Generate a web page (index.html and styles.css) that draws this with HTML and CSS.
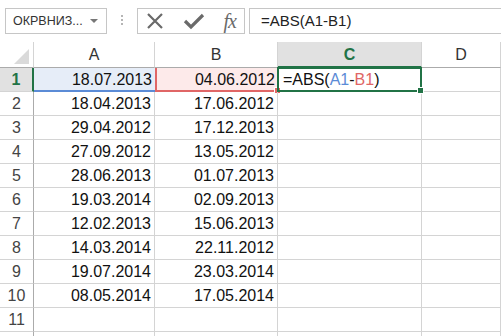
FILE: index.html
```html
<!DOCTYPE html>
<html lang="ru">
<head>
    <meta charset="UTF-8">
    <title>ABS</title>
    <link rel="stylesheet" href="styles.css">
</head>
<body>

<!-- Formula bar -->
<div class="toolbar">
    <div class="name-box">
        <span>ОКРВНИЗ...</span>
        <span class="arrow"></span>
    </div>
    <div class="grip"><i></i><i></i><i></i></div>
    <div class="fx-box">
        <svg width="20" height="18" viewBox="0 0 20 18">
            <path d="M3 2 L17 16 M17 2 L3 16" stroke="#6a6a6a" stroke-width="2.2" fill="none"/>
        </svg>
        <svg width="22" height="18" viewBox="0 0 22 18">
            <path d="M2 9 L8 15 L20 3" stroke="#6a6a6a" stroke-width="3.2" fill="none"/>
        </svg>
        <span class="fx">fx</span>
    </div>
    <div class="formula">=ABS(A1-B1)</div>
</div>

<!-- Sheet -->
<div class="sheet">
    <div class="corner"><span class="tri"></span></div>
    <div class="col-head">A</div>
    <div class="col-head">B</div>
    <div class="col-head active">C</div>
    <div class="col-head">D</div>

    <div class="row-head active">1</div>
    <div class="cell ref-a">18.07.2013</div>
    <div class="cell ref-b">04.06.2012<span class="knob red"></span></div>
    <div class="cell current">=ABS(<span class="blue">A1</span>-<span class="red-t">B1</span>)<span class="knob green"></span></div>
    <div class="cell"></div>

    <div class="row-head">2</div><div class="cell">18.04.2013</div><div class="cell">17.06.2012</div><div class="cell"></div><div class="cell"></div>
    <div class="row-head">3</div><div class="cell">29.04.2012</div><div class="cell">17.12.2013</div><div class="cell"></div><div class="cell"></div>
    <div class="row-head">4</div><div class="cell">27.09.2012</div><div class="cell">13.05.2012</div><div class="cell"></div><div class="cell"></div>
    <div class="row-head">5</div><div class="cell">28.06.2013</div><div class="cell">01.07.2013</div><div class="cell"></div><div class="cell"></div>
    <div class="row-head">6</div><div class="cell">19.03.2014</div><div class="cell">02.09.2013</div><div class="cell"></div><div class="cell"></div>
    <div class="row-head">7</div><div class="cell">12.02.2013</div><div class="cell">15.06.2013</div><div class="cell"></div><div class="cell"></div>
    <div class="row-head">8</div><div class="cell">14.03.2014</div><div class="cell">22.11.2012</div><div class="cell"></div><div class="cell"></div>
    <div class="row-head">9</div><div class="cell">19.07.2014</div><div class="cell">23.03.2014</div><div class="cell"></div><div class="cell"></div>
    <div class="row-head">10</div><div class="cell">08.05.2014</div><div class="cell">17.05.2014</div><div class="cell"></div><div class="cell"></div>
    <div class="row-head">11</div><div class="cell"></div><div class="cell"></div><div class="cell"></div><div class="cell"></div>
    <div class="row-head"></div><div class="cell"></div><div class="cell"></div><div class="cell"></div><div class="cell"></div>
</div>

</body>
</html>
```

FILE: styles.css
```css
body {
    margin: 0;
    width: 501px;
    height: 336px;
    overflow: hidden;
    background: #fff;
    font-family: "Liberation Sans", Arial, sans-serif;
    color: #222;
}

.toolbar {
    display: flex;
    align-items: flex-start;
    height: 42px;
    box-sizing: border-box;
    padding: 8px 0 0 5px;
}

.name-box {
    width: 102px;
    height: 26px;
    box-sizing: border-box;
    border: 1px solid #c6c6c6;
    display: flex;
    align-items: center;
    justify-content: space-between;
    padding: 0 8px 0 7px;
    font-size: 12.5px;
    color: #333;
}

.arrow {
    width: 0;
    height: 0;
    border-left: 4px solid transparent;
    border-right: 4px solid transparent;
    border-top: 4px solid #777;
}

.grip {
    width: 30px;
    display: flex;
    flex-direction: column;
    align-items: center;
    gap: 2px;
    padding-top: 7px;
}

.grip i {
    width: 2px;
    height: 2px;
    background: #b5b5b5;
}

.fx-box {
    width: 108px;
    height: 26px;
    box-sizing: border-box;
    border: 1px solid #c6c6c6;
    display: flex;
    align-items: center;
    justify-content: space-between;
    padding: 0 8px 0 7px;
}

.fx {
    font-family: "Liberation Serif", serif;
    font-style: italic;
    font-size: 20px;
    color: #6a6a6a;
    letter-spacing: -1px;
}

.formula {
    margin-left: 4px;
    flex: 1;
    height: 26px;
    box-sizing: border-box;
    border: 1px solid #c6c6c6;
    border-right: none;
    padding-left: 11px;
    line-height: 24px;
    font-size: 15px;
    color: #222;
}

.sheet {
    display: grid;
    grid-template-columns: 34px 121px 123px 144px 79px;
    grid-template-rows: 26px;
    grid-auto-rows: 24px;
}

.sheet > div {
    box-sizing: border-box;
    border-right: 1px solid #d4d4d4;
    border-bottom: 1px solid #d4d4d4;
    position: relative;
}

.corner {
    border-bottom-color: #ababab !important;
}

.tri {
    position: absolute;
    right: 4px;
    bottom: 3px;
    width: 0;
    height: 0;
    border-left: 15px solid transparent;
    border-bottom: 15px solid #dadada;
}

.col-head {
    text-align: center;
    font-size: 16px;
    line-height: 26px;
    color: #333;
    border-bottom-color: #ababab !important;
}

.col-head.active {
    background: #e1e1e1;
    color: #217346;
    font-weight: bold;
    border-bottom: 2px solid #217346 !important;
}

.row-head {
    text-align: center;
    font-size: 16px;
    line-height: 23px;
    color: #444;
    border-right-color: #ababab !important;
}

.row-head.active {
    background: #e1e1e1;
    color: #217346;
    font-weight: bold;
    border-right: 2px solid #217346 !important;
}

.cell {
    text-align: right;
    padding-right: 3px;
    font-size: 16px;
    line-height: 23px;
    color: #111;
}

.cell.ref-a {
    background: #e6edf8;
    border-right: none !important;
    border-bottom: 2px solid #5b8bd6 !important;
}

.cell.ref-b {
    background: #fdeaea;
    border-left: 2px solid #e06666;
    border-bottom: 2px solid #e06666 !important;
    border-right: none !important;
}

.cell.current {
    text-align: left;
    padding-left: 4px;
    border: 2px solid #217346 !important;
    margin: -1px 0 0 -1px;
    line-height: 21px;
}

.blue {
    color: #5b8bd6;
}

.red-t {
    color: #e06666;
}

.knob {
    position: absolute;
    width: 5px;
    height: 5px;
    border: 1px solid #fff;
    box-sizing: content-box;
}

.knob.red {
    background: #e06666;
    right: -3px;
    bottom: -4px;
}

.knob.green {
    background: #217346;
    right: -4px;
    bottom: -4px;
    z-index: 2;
}
```
